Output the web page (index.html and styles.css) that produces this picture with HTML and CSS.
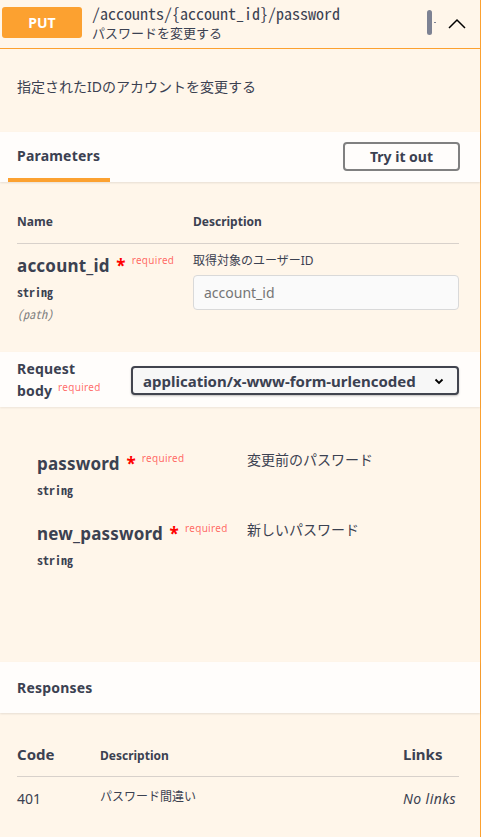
FILE: index.html
```html
<!DOCTYPE html>
<html lang="ja">
<head>
<meta charset="utf-8">
<link rel="stylesheet" href="styles.css">
</head>
<body>
<div class="opblock">
  <div class="summary">
    <span class="method">PUT</span>
    <div class="path-block">
      <div class="path">/accounts/{account_id}/password</div>
      <div class="summary-desc">パスワードを変更する</div>
    </div>
    <div class="copy"><span class="copy-bar"></span><span class="copy-dot"></span></div>
    <svg class="chevron" width="20" height="20" viewBox="0 0 20 20"><path d="M2 14 L10 6 L18 14" fill="none" stroke="#000" stroke-width="1.5"/></svg>
  </div>
  <div class="body">
    <div class="op-desc">指定されたIDのアカウントを変更する</div>

    <div class="section-header">
      <div class="tab">Parameters</div>
      <button class="try">Try it out</button>
    </div>

    <div class="params">
      <div class="params-head">
        <div class="col-name">Name</div>
        <div class="col-desc">Description</div>
      </div>
      <div class="param-row">
        <div class="col-name">
          <div class="pname">account_id <span class="star">*</span><sup class="req">required</sup></div>
          <div class="ptype">string</div>
          <div class="pin">(path)</div>
        </div>
        <div class="col-desc">
          <div class="pdesc">取得対象のユーザーID</div>
          <div class="input">account_id</div>
        </div>
      </div>
    </div>

    <div class="section-header rb-header">
      <div class="rb-title">Request<br>body <sup class="req">required</sup></div>
      <div class="select">
        <span>application/x-www-form-urlencoded</span>
        <svg width="12" height="12" viewBox="0 0 12 12"><path d="M2.5 4.5 L6 8 L9.5 4.5" fill="none" stroke="#000" stroke-width="1.8"/></svg>
      </div>
    </div>

    <div class="rb-body">
      <div class="rb-row">
        <div class="rb-name">
          <div class="pname">password <span class="star">*</span><sup class="req">required</sup></div>
          <div class="ptype">string</div>
        </div>
        <div class="rb-desc">変更前のパスワード</div>
      </div>
      <div class="rb-row">
        <div class="rb-name">
          <div class="pname">new_password <span class="star">*</span><sup class="req">required</sup></div>
          <div class="ptype">string</div>
        </div>
        <div class="rb-desc">新しいパスワード</div>
      </div>
    </div>

    <div class="section-header resp-header">
      <div class="resp-title">Responses</div>
    </div>

    <div class="responses">
      <div class="resp-head">
        <div class="r-code">Code</div>
        <div class="r-desc">Description</div>
        <div class="r-links">Links</div>
      </div>
      <div class="resp-row">
        <div class="r-code code-val">401</div>
        <div class="r-desc desc-val">パスワード間違い</div>
        <div class="r-links links-val">No links</div>
      </div>
    </div>
  </div>
</div>
</body>
</html>
```
FILE: styles.css
```css
* { box-sizing: border-box; }
html, body { margin: 0; padding: 0; background: #fff; }
body {
  font-family: "Noto Sans", "Noto Sans CJK JP", sans-serif;
  color: #3b4151;
  width: 482px;
  overflow: hidden;
}
.opblock {
  width: 481px;
  background: #fff6ea;
  border-right: 1px solid #fca130;
  min-height: 837px;
}
.summary {
  height: 49px;
  border-bottom: 1px solid #fca130;
  display: flex;
  align-items: flex-start;
  padding: 7px 0 0 2px;
}
.method {
  width: 80px;
  height: 31px;
  background: #fca130;
  border-radius: 3px;
  color: #fff;
  font-weight: 700;
  font-size: 14px;
  display: flex;
  align-items: center;
  justify-content: center;
  flex: none;
}
.path-block {
  margin-left: 10px;
  flex: 1;
  margin-top: -3px;
}
.path {
  font-family: "Noto Sans Mono CJK JP", "Liberation Mono", monospace;
  font-size: 16px;
  line-height: 18px;
  height: 18px;
  color: #3b4151;
}
.summary-desc {
  font-size: 13px;
  line-height: 16px;
  margin-top: 3px;
  color: #3b4151;
}
.copy {
  display: flex;
  align-items: center;
  margin-top: 3px;
  height: 25px;
  gap: 2px;
  margin-right: 1px;
}
.copy-bar {
  width: 5px;
  height: 25px;
  background: #7d8293;
  border-radius: 3px;
}
.copy-dot {
  width: 2px;
  height: 1px;
  background: #7d8293;
}
.chevron {
  margin: 7px 13px 0 10px;
}
.op-desc {
  font-size: 14px;
  height: 83px;
  padding: 27px 0 0 17px;
}
.section-header {
  background: rgba(255,255,255,.8);
  box-shadow: 0 1px 2px rgba(0,0,0,.1);
  display: flex;
  align-items: center;
  height: 50px;
  padding: 0 20px 0 8px;
}
.tab {
  font-weight: 700;
  font-size: 14px;
  letter-spacing: 0.2px;
  align-self: stretch;
  width: 102px;
  padding: 14px 0 0 9px;
  border-bottom: 4px solid #fca130;
}
.try {
  margin-left: auto;
  width: 117px;
  height: 29px;
  border: 2px solid #808080;
  border-radius: 4px;
  background: transparent;
  font-family: inherit;
  font-weight: 700;
  font-size: 14px;
  color: #3b4151;
  padding: 0;
  margin-top: -2px;
}
.params {
  padding: 29px 21px 0 17px;
  height: 170px;
}
.params-head {
  display: flex;
  font-size: 12px;
  font-weight: 700;
  height: 33px;
  border-bottom: 1px solid rgba(59,65,81,.2);
  padding-top: 2px;
}
.col-name { width: 176px; flex: none; }
.col-desc { flex: 1; }
.param-row { display: flex; padding-top: 4px; }
.pname {
  font-weight: 700;
  font-size: 17px;
  letter-spacing: 0.2px;
  line-height: 24px;
}
.star {
  color: red;
  font-size: 17px;
  margin-left: 2px;
}
.req {
  color: rgba(255,0,0,.6);
  font-size: 10px;
  font-weight: 400;
  letter-spacing: 0.3px;
  vertical-align: 8px;
  margin-left: 6px;
}
.ptype {
  font-family: "Noto Sans Mono CJK JP", "Liberation Mono", monospace;
  font-size: 12px;
  font-weight: 600;
  margin-top: 5px;
}
.pin {
  font-family: "Noto Sans Mono CJK JP", "Liberation Mono", monospace;
  font-size: 12px;
  font-style: italic;
  color: gray;
  margin-top: 5px;
}
.param-row .col-desc { padding-top: 4px; }
.pdesc {
  font-size: 12px;
  line-height: 18px;
}
.input {
  margin-top: 5px;
  height: 35px;
  border: 1px solid #d9d9d9;
  border-radius: 4px;
  background: #fafafa;
  color: #757575;
  font-size: 14px;
  padding: 7px 10px;
}
.rb-header {
  height: 55px;
  padding: 0 21px 0 17px;
  box-shadow: 0 1px 2px rgba(0,0,0,.08);
}
.rb-title {
  font-weight: 700;
  font-size: 14px;
  letter-spacing: 0.2px;
  line-height: 19px;
  width: 114px;
  flex: none;
}
.rb-title .req { margin-left: 2px; vertical-align: 5px; }
.select {
  flex: 1;
  height: 29px;
  border: 2px solid #41444e;
  border-radius: 4px;
  box-shadow: 0 1px 2px rgba(0,0,0,.25);
  background: #f7f7f7;
  display: flex;
  align-items: center;
  padding: 0 12px 0 10px;
  justify-content: space-between;
  font-weight: 700;
  font-size: 15px;
  margin-top: 2px;
}
.rb-body {
  height: 255px;
  padding: 39px 0 0 37px;
}
.rb-row { display: flex; height: 70px; }
.rb-name { width: 210px; flex: none; }
.rb-desc { font-size: 14px; padding-top: 3px; }
.resp-header {
  height: 51px;
  padding: 0 17px;
}
.resp-title { font-weight: 700; font-size: 14px; letter-spacing: 0.2px; }
.responses {
  padding: 29px 21px 0 17px;
}
.resp-head, .resp-row { display: flex; }
.resp-head {
  height: 35px;
  border-bottom: 1px solid rgba(59,65,81,.2);
  align-items: baseline;
  padding-top: 2px;
}
.r-code { width: 83px; flex: none; }
.r-desc { flex: 1; }
.r-links { width: 56px; flex: none; }
.resp-head .r-code, .resp-head .r-links { font-weight: 700; font-size: 15px; }
.resp-head .r-desc { font-weight: 700; font-size: 12px; }
.resp-row { padding-top: 10px; align-items: flex-start; }
.code-val { font-size: 14px; padding-top: 2px; }
.desc-val { font-size: 12px; }
.links-val { font-size: 14px; font-style: italic; padding-top: 2px; letter-spacing: 0.4px; }
```
